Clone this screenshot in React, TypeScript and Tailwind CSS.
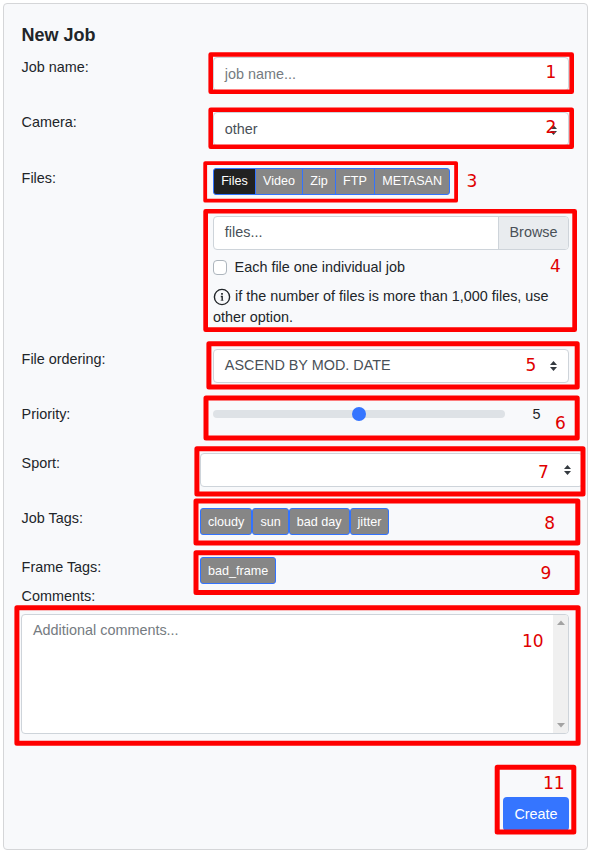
import type { ReactNode } from "react";

type Mark = {
  n: string;
  // outer left, top, right, bottom of the frame
  box: [number, number, number, number];
  stroke: number;
  // centre of the number
  at: [number, number];
};

const marks: Mark[] = [
  { n: "1", box: [208.4, 52.2, 574, 94], stroke: 4.6, at: [550.8, 72] },
  { n: "2", box: [208.4, 107.4, 574, 149], stroke: 4.6, at: [550.8, 127] },
  { n: "3", box: [203.3, 161.2, 458, 202.6], stroke: 3.8, at: [471.8, 181.2] },
  { n: "4", box: [203.3, 208.9, 577, 332], stroke: 4.7, at: [555.4, 266] },
  { n: "5", box: [206.4, 341.2, 579.7, 389.6], stroke: 5, at: [531, 365.2] },
  { n: "6", box: [203.5, 395.4, 579.7, 440.6], stroke: 5, at: [560.3, 423.2] },
  { n: "7", box: [194.4, 446.2, 585.5, 496.6], stroke: 5, at: [543.3, 472.2] },
  { n: "8", box: [193.5, 498.4, 580.3, 545.6], stroke: 5, at: [549.6, 523.2] },
  { n: "9", box: [193.5, 550.3, 579.7, 595], stroke: 5, at: [545.8, 573] },
  { n: "10", box: [14.4, 605.3, 580.6, 745.7], stroke: 5, at: [532.8, 641.2] },
  { n: "11", box: [494.7, 764.8, 576.3, 834.6], stroke: 5, at: [553.8, 783] },
];

function Annotations() {
  return (
    <svg className="pointer-events-none absolute left-0 top-0" width="593" height="855">
      {marks.map(({ n, box: [l, t, r, b], stroke, at }) => (
        <g key={n}>
          <rect
            x={l + stroke / 2}
            y={t + stroke / 2}
            width={r - l - stroke}
            height={b - t - stroke}
            fill="none"
            stroke="#ff0000"
            strokeWidth={stroke}
            strokeLinejoin="round"
          />
          <text
            x={at[0]}
            y={at[1] + 6.2}
            textAnchor="middle"
            className="fill-[#e00000] font-['DejaVu_Sans',sans-serif] text-[17px]"
          >
            {n}
          </text>
        </g>
      ))}
    </svg>
  );
}

function Carets() {
  return (
    <svg className="shrink-0" width="7" height="10" viewBox="0 0 4 5" preserveAspectRatio="none">
      <path fill="#343a40" d="M2 0L0 2h4zm0 5L0 3h4z" />
    </svg>
  );
}

function Row({ label, height, children }: { label: string; height: string; children: ReactNode }) {
  return (
    <div className={`flex ${height}`}>
      <div className="w-[179px] shrink-0 pl-[0.6px] pt-px">{label}</div>
      {children}
    </div>
  );
}

const field = "flex h-[34px] items-center rounded border border-[#ced4da] bg-white";
const small = "h-[27px] border border-[#3273ff] bg-[#868686] text-[12.6px] text-white";
const segment = `${small} px-[7.15px] leading-[24px]`;
const tag = `${small} rounded-[3px] px-[7px] leading-[24px]`;

export default function App() {
  return (
    <div className="relative h-[855px] w-[593px] overflow-hidden bg-white font-['Liberation_Sans',Arial,sans-serif] text-[14.4px] leading-[21.6px] text-[#212529]">
      <div className="ml-[3px] flex h-[850px] pt-[3px]">
        <div className="w-[585px] rounded border border-[#d5d6d8] bg-[#f8f9fb] pl-[17px] pt-5">
          <h1 className="h-[32px] pl-[0.6px] text-[18px] font-bold leading-[22px]">New Job</h1>

          <Row label="Job name:" height="h-[55px]">
            <div className={`${field} ml-[13px] mt-px w-[356px] px-[10.8px] pt-[2px] text-[#757b81]`}>job name...</div>
          </Row>

          <Row label="Camera:" height="h-[56px]">
            <div className={`${field} ml-[13px] mt-px w-[356px] justify-between px-[10.8px] pt-[2px] text-[#495057]`}>
              other
              <Carets />
            </div>
          </Row>

          <Row label="Files:" height="h-[181px]">
            <div className="ml-[13px] w-[356px]">
              <div className="mt-px flex">
                <button className={`${segment} rounded-l-[3px] bg-[#212121]! pb-[2px]`}>Files</button>
                <button className={`${segment} -ml-px pb-[2px]`}>Video</button>
                <button className={`${segment} -ml-px pb-[2px]`}>Zip</button>
                <button className={`${segment} -ml-px pb-[2px]`}>FTP</button>
                <button className={`${segment} -ml-px rounded-r-[3px] pb-[2px]`}>METASAN</button>
              </div>
              <div className={`${field} mt-[21px] justify-between overflow-hidden pl-[10.8px] text-[#495057]`}>
                files...
                <div className="flex h-full w-[70px] items-center justify-center border-l border-[#ced4da] bg-[#e9ecef]">
                  Browse
                </div>
              </div>
              <label className="mt-[7px] flex items-center gap-[7.6px]">
                <span className="h-[15px] w-[14px] rounded-[4px] border border-[#adb5bd] bg-white" />
                Each file one individual job
              </label>
              <p className="mt-[7px] h-[42px] leading-[21px]">
                <svg className="mr-1 -mt-[2px] inline-block align-[-5px]" width="18" height="18" viewBox="0 0 18 18">
                  <circle cx="9" cy="9" r="7.6" fill="none" stroke="#212529" strokeWidth="1.4" />
                  <path d="M9 5v1.7" stroke="#212529" strokeWidth="1.7" />
                  <path d="M7.8 8.5H9.2V12.6" fill="none" stroke="#212529" strokeWidth="1.4" />
                  <path d="M7.6 12.4h3" stroke="#212529" strokeOpacity="0.6" strokeWidth="0.8" />
                </svg>
                if the number of files is more than 1,000 files, use other option.
              </p>
            </div>
          </Row>

          <Row label="File ordering:" height="h-[55px]">
            <div className={`${field} ml-[13px] mt-px w-[356px] justify-between px-[10.8px] text-[#495057]`}>
              ASCEND BY MOD. DATE
              <Carets />
            </div>
          </Row>

          <Row label="Priority:" height="h-[49px]">
            <div className="ml-[13px] flex h-[22px] items-center">
              <div className="flex h-2 w-[292px] items-center justify-center rounded-full bg-[#dee2e6]">
                <div className="h-[14px] w-[14px] rounded-full bg-[#3575ff]" />
              </div>
              <span className="ml-[27.4px] pt-[2px]">5</span>
            </div>
          </Row>

          <Row label="Sport:" height="h-[55px]">
            <div className={`${field} mt-px w-[383px] shrink-0 justify-end pr-[11px]`}>
              <Carets />
            </div>
          </Row>

          <Row label="Job Tags:" height="h-[49px]">
            <div className="mt-px flex">
              <button className={tag}>cloudy</button>
              <button className={tag}>sun</button>
              <button className={tag}>bad day</button>
              <button className={tag}>jitter</button>
            </div>
          </Row>

          <Row label="Frame Tags:" height="h-[29px]">
            <div className="mt-px flex">
              <button className={tag}>bad_frame</button>
            </div>
          </Row>

          <div className="h-[29px] pl-[0.6px] pt-px">Comments:</div>
          <div className="flex h-[120px] w-[548px] justify-between overflow-hidden rounded border border-[#ced4da] bg-white pl-[11px] pt-[5px] text-[#757b81]">
            Additional comments...
            <div className="-mt-[5px] flex w-[15px] flex-col items-center justify-between bg-[#f0f0f0] py-[5px]">
              <svg width="8" height="5"><path d="M4 0.5L8 5H0z" fill="#a3a3a3" /></svg>
              <svg width="8" height="5"><path d="M4 4.5L8 0H0z" fill="#a3a3a3" /></svg>
            </div>
          </div>

          <div className="flex w-[548px] justify-end pt-[63px]">
            <button className="h-[34px] w-[66px] rounded bg-[#3575ff] pt-[2px] text-white">Create</button>
          </div>
        </div>
      </div>
      <Annotations />
    </div>
  );
}
